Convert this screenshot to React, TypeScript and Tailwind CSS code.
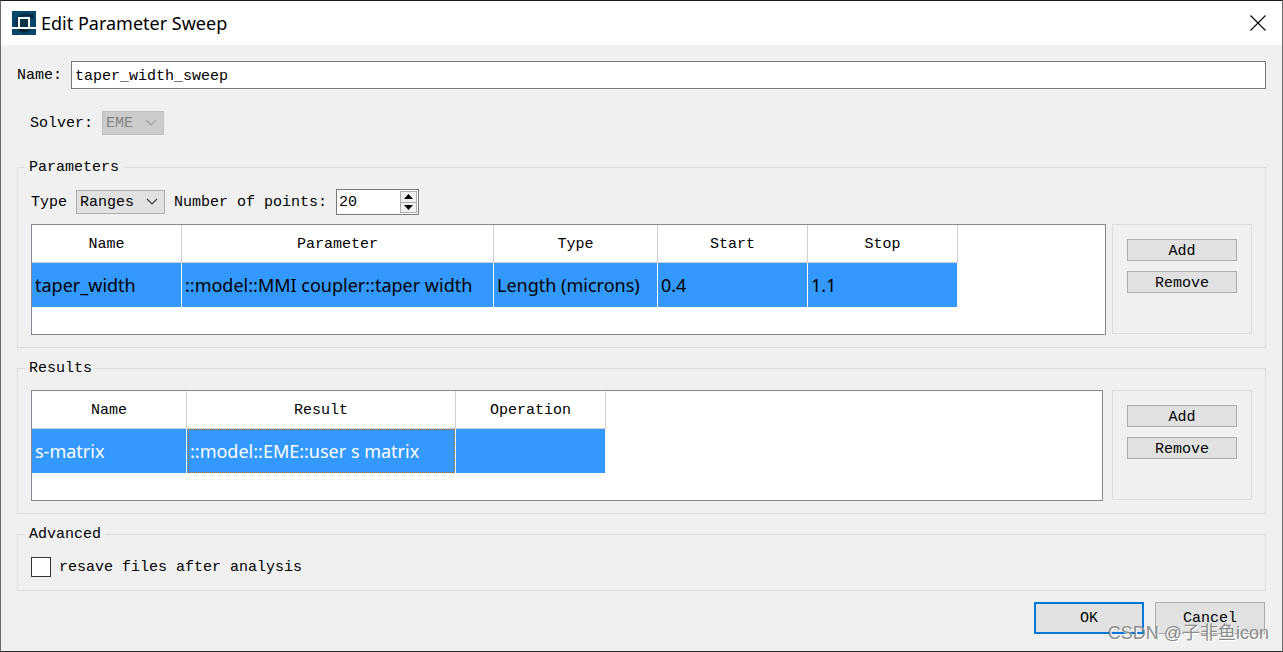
import { useState, type ReactNode } from "react";

const parameterColumns = [
  { label: "Name", width: "w-[150px]" },
  { label: "Parameter", width: "w-[312px]" },
  { label: "Type", width: "w-[164px]" },
  { label: "Start", width: "w-[150px]" },
  { label: "Stop", width: "w-[150px]" },
];

const resultColumns = [
  { label: "Name", width: "w-[155px]" },
  { label: "Result", width: "w-[269px]" },
  { label: "Operation", width: "w-[150px]" },
];

const parameterRow = ["taper_width", "::model::MMI coupler::taper width", "Length (microns)", "0.4", "1.1"];
const resultRow = ["s-matrix", "::model::EME::user s matrix", ""];

type Column = { label: string; width: string };

function Logo() {
  return (
    <svg viewBox="0 0 24 24" className="size-6 shrink-0" aria-hidden="true">
      <defs>
        <linearGradient id="logo-ring" x1="0" y1="0" x2="1" y2="1">
          <stop offset="0" stopColor="#0a3a55" />
          <stop offset="1" stopColor="#02131f" />
        </linearGradient>
      </defs>
      <rect width="24" height="24" fill="#07486a" />
      <path d="M21 2 V8 L18 6 C12 3 7 8 8 13 C9 18 14 20 19 18 C16 22 10 23 6 19 C1 14 3 6 9 3 C13 1 17 2 19 4 Z" fill="url(#logo-ring)" />
      <rect x="8" y="8" width="8" height="8" fill="#0b3348" />
      <path d="M0 17 H24 M7 17 V7 H17 V17" fill="none" stroke="#fff" strokeWidth="2" />
    </svg>
  );
}

function Chevron() {
  return (
    <svg viewBox="0 0 12 8" className="pointer-events-none absolute right-[7px] top-2 h-2 w-3" aria-hidden="true">
      <path d="M1 1 L6 6 L11 1" fill="none" stroke="currentColor" strokeWidth="1.2" />
    </svg>
  );
}

function Group({ title, children }: { title: string; children: ReactNode }) {
  return (
    <fieldset className="mt-[10px] min-w-0 border border-[#dcdcdc]">
      <legend className="ml-[7px] h-5 px-1 pt-px leading-5">{title}</legend>
      <div className="px-[13px] py-3">{children}</div>
    </fieldset>
  );
}

function DataTable({
  columns,
  row,
  textColor,
  focused,
}: {
  columns: Column[];
  row: string[];
  textColor: string;
  focused?: number;
}) {
  return (
    <div className="h-[111px] min-w-0 flex-1 overflow-hidden border border-[#828790] bg-white">
      <table className="table-fixed border-separate border-spacing-0">
        <thead>
          <tr className="h-[38px]">
            {columns.map((c) => (
              <th key={c.label} className={`${c.width} border-b border-r border-[#d0d0d0] p-0 pt-0.5 font-normal`}>
                {c.label}
              </th>
            ))}
          </tr>
        </thead>
        <tbody>
          <tr className={`h-11 font-['Noto_Sans',sans-serif] text-lg leading-6 ${textColor}`}>
            {row.map((cell, i) => (
              <td key={i} className="whitespace-nowrap border-r border-white bg-[#3399ff] p-0">
                <div
                  className={
                    i === focused
                      ? "ml-px flex h-11 items-center border border-dotted border-[#cc6600] pl-px"
                      : "flex h-11 items-center pl-[3px]"
                  }
                >
                  {cell}
                </div>
              </td>
            ))}
          </tr>
        </tbody>
      </table>
    </div>
  );
}

function SideButtons() {
  return (
    <div className="flex h-[110px] w-[140px] shrink-0 flex-col gap-[10px] border border-[#dcdcdc] p-[14px]">
      {["Add", "Remove"].map((label) => (
        <button key={label} type="button" className="h-[22px] border border-[#adadad] bg-[#e1e1e1] pt-0.5 leading-5">
          {label}
        </button>
      ))}
    </div>
  );
}

export default function App() {
  const [name, setName] = useState("taper_width_sweep");
  const [points, setPoints] = useState(20);
  const [resave, setResave] = useState(false);

  return (
    <div className="relative flex min-h-screen flex-col border border-[#6b6b6b] border-t-[#1a1a1a] border-b-[#2b2b2b] bg-[#f0f0f0] font-['Liberation_Mono',monospace] text-[15px] leading-5 text-black">
      <header className="flex h-11 items-center bg-white pl-[11px] pr-4">
        <Logo />
        <h1 className="ml-[5px] flex-1 font-['Noto_Sans',sans-serif] text-lg leading-6">Edit Parameter Sweep</h1>
        <button type="button" aria-label="Close">
          <svg viewBox="0 0 16 16" className="size-4" aria-hidden="true">
            <path d="M0.5 0.5 L15.5 15.5 M15.5 0.5 L0.5 15.5" stroke="#000" strokeWidth="1.1" />
          </svg>
        </button>
      </header>

      <main className="px-4 pt-4">
        <div className="flex h-7 items-center">
          <label htmlFor="name" className="w-[54px] pt-0.5">Name:</label>
          <input
            id="name"
            value={name}
            onChange={(e) => setName(e.target.value)}
            className="h-7 min-w-0 flex-1 border border-[#7a7a7a] bg-white px-[3px] pt-0.5 outline-none"
          />
        </div>

        <div className="my-[22px] flex h-6 items-center pl-[13px]">
          <label htmlFor="solver" className="w-[72px] pt-0.5">Solver:</label>
          <div className="relative text-[#a0a0a0]">
            <select
              id="solver"
              disabled
              className="block h-6 w-[62px] appearance-none border border-[#bfbfbf] bg-[#cccccc] pl-[3px] pt-0.5 text-[#838383] opacity-100"
            >
              <option>EME</option>
            </select>
            <Chevron />
          </div>
        </div>

        <Group title="Parameters">
          <div className="mb-[9px] flex h-[26px] items-center">
            <label htmlFor="type" className="w-[45px] pt-0.5">Type</label>
            <div className="relative text-[#404040]">
              <select
                id="type"
                className="block h-6 w-[89px] appearance-none border border-[#adadad] bg-[#e1e1e1] pl-[3px] pt-0.5 text-black"
              >
                <option>Ranges</option>
              </select>
              <Chevron />
            </div>
            <label htmlFor="points" className="ml-[9px] w-[162px] pt-0.5">Number of points:</label>
            <div className="flex h-[26px] w-[83px] border border-[#7a7a7a] bg-white p-px">
              <input
                id="points"
                inputMode="numeric"
                value={points}
                onChange={(e) => setPoints(Number(e.target.value) || 0)}
                className="min-w-0 flex-1 pl-px pt-0.5 outline-none"
              />
              <div className="flex w-[17px] flex-col">
                <button
                  type="button"
                  aria-label="Increase"
                  onClick={() => setPoints(points + 1)}
                  className="flex flex-1 items-center justify-center border border-[#adadad] bg-[#f0f0f0]"
                >
                  <svg viewBox="0 0 9 5" className="h-[5px] w-[9px]"><path d="M0 5 L4.5 0 L9 5 Z" /></svg>
                </button>
                <button
                  type="button"
                  aria-label="Decrease"
                  onClick={() => setPoints(points - 1)}
                  className="flex flex-1 items-center justify-center border border-t-0 border-[#adadad] bg-[#f0f0f0]"
                >
                  <svg viewBox="0 0 9 5" className="h-[5px] w-[9px]"><path d="M0 0 L4.5 5 L9 0 Z" /></svg>
                </button>
              </div>
            </div>
          </div>
          <div className="flex gap-[6px]">
            <DataTable columns={parameterColumns} row={parameterRow} textColor="text-black" />
            <SideButtons />
          </div>
        </Group>

        <Group title="Results">
          <div className="flex gap-[9px]">
            <DataTable columns={resultColumns} row={resultRow} textColor="text-white" focused={1} />
            <SideButtons />
          </div>
        </Group>

        <Group title="Advanced">
          <div className="flex h-[22px] items-center gap-2">
            <input
              id="resave"
              type="checkbox"
              checked={resave}
              onChange={(e) => setResave(e.target.checked)}
              className="size-5 appearance-none border border-[#333333] bg-white checked:bg-[#333333]"
            />
            <label htmlFor="resave" className="pt-0.5">resave files after analysis</label>
          </div>
        </Group>

        <div className="mt-[11px] flex justify-end gap-[11px] pr-px">
          <button type="button" className="h-8 w-[110px] border-2 border-[#0078d7] bg-[#e1e1e1] pt-0.5">OK</button>
          <button type="button" className="h-8 w-[110px] border border-[#adadad] bg-[#e1e1e1] pt-0.5">Cancel</button>
        </div>
      </main>

      <span className="pointer-events-none absolute bottom-[6px] right-[13px] whitespace-nowrap font-['Liberation_Sans','Noto_Sans_CJK_SC',sans-serif] text-lg leading-6 text-[#8c8c8c] [text-shadow:1px_1px_0_#ffffff]">
        CSDN @子非鱼icon
      </span>
    </div>
  );
}
